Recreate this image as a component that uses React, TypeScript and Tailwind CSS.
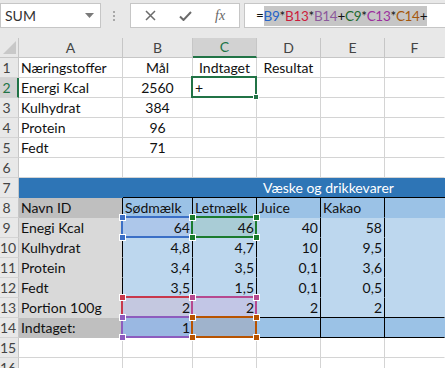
import React from "react";

type Cell = { t?: string; a?: "l" | "r" | "c"; s: string };

const W = ["w-[104px]", "w-[70px]", "w-[64px]", "w-[64px]", "w-[64px]", "w-[60px]"];

const P = "bg-white border-r-[#d4d4d4] border-b-[#d4d4d4]";
const PF = "bg-white border-r-white border-b-[#d4d4d4]";
const HA = "bg-[#bfbfbf] border-r-black border-b-[#bfbfbf]";
const H = "bg-[#9bc2e6] border-r-black border-b-[#9bc2e6]";
const HF = "bg-[#9bc2e6] border-r-[#9bc2e6] border-b-[#9bc2e6]";
const DA = "bg-[#d9d9d9] border-r-black border-b-[#d9d9d9]";
const D = "bg-[#bdd7ee] border-r-black border-b-[#bdd7ee]";
const DF = "bg-[#bdd7ee] border-r-[#bdd7ee] border-b-[#bdd7ee]";
const D13 = "bg-[#bdd7ee] border-r-black border-b-black";
const DF13 = "bg-[#bdd7ee] border-r-[#bdd7ee] border-b-black";
const T = "bg-[#9bc2e6] border-r-black border-b-black";
const TF = "bg-[#9bc2e6] border-r-[#9bc2e6] border-b-black";

const plain = (cells: Cell[]): Cell[] => {
  const out = [...cells];
  while (out.length < 5) out.push({ s: P });
  out.push({ s: PF });
  return out;
};

const rows: { n: number; cells: Cell[] }[] = [
  {
    n: 1,
    cells: plain([
      { t: "Næringstoffer", s: P },
      { t: "Mål", a: "c", s: P },
      { t: "Indtaget", a: "c", s: P },
      { t: "Resultat", a: "c", s: P },
    ]),
  },
  {
    n: 2,
    cells: plain([
      { t: "Energi Kcal", s: P },
      { t: "2560", a: "c", s: P },
      { t: "+", s: P },
    ]),
  },
  { n: 3, cells: plain([{ t: "Kulhydrat", s: P }, { t: "384", a: "c", s: P }]) },
  { n: 4, cells: plain([{ t: "Protein", s: P }, { t: "96", a: "c", s: P }]) },
  { n: 5, cells: plain([{ t: "Fedt", s: P }, { t: "71", a: "c", s: P }]) },
  { n: 6, cells: plain([]) },
];

const rowsB: { n: number; cells: Cell[] }[] = [
  {
    n: 8,
    cells: [
      { t: "Navn ID", s: HA },
      { t: "Sødmælk", s: H },
      { t: "Letmælk", s: H },
      { t: "Juice", s: H },
      { t: "Kakao", s: H },
      { s: HF },
    ],
  },
  {
    n: 9,
    cells: [
      { t: "Enegi Kcal", s: DA },
      { t: "64", a: "r", s: "bg-[#adc7ea] border-r-black border-b-[#adc7ea]" },
      { t: "46", a: "r", s: "bg-[#a9ccd6] border-r-black border-b-[#a9ccd6]" },
      { t: "40", a: "r", s: D },
      { t: "58", a: "r", s: D },
      { s: DF },
    ],
  },
  {
    n: 10,
    cells: [
      { t: "Kulhydrat", s: DA },
      { t: "4,8", a: "r", s: D },
      { t: "4,7", a: "r", s: D },
      { t: "10", a: "r", s: D },
      { t: "9,5", a: "r", s: D },
      { s: DF },
    ],
  },
  {
    n: 11,
    cells: [
      { t: "Protein", s: DA },
      { t: "3,4", a: "r", s: D },
      { t: "3,5", a: "r", s: D },
      { t: "0,1", a: "r", s: D },
      { t: "3,6", a: "r", s: D },
      { s: DF },
    ],
  },
  {
    n: 12,
    cells: [
      { t: "Fedt", s: DA },
      { t: "3,5", a: "r", s: D },
      { t: "1,5", a: "r", s: D },
      { t: "0,1", a: "r", s: D },
      { t: "0,5", a: "r", s: D },
      { s: DF },
    ],
  },
  {
    n: 13,
    cells: [
      { t: "Portion 100g", s: DA },
      { t: "2", a: "r", s: "bg-[#c4c8e0] border-r-black border-b-black" },
      { t: "2", a: "r", s: "bg-[#c2c6e6] border-r-black border-b-black" },
      { t: "2", a: "r", s: D13 },
      { t: "2", a: "r", s: D13 },
      { s: DF13 },
    ],
  },
  {
    n: 14,
    cells: [
      { t: "Indtaget:", s: HA },
      { t: "1", a: "r", s: "bg-[#9ab8e2] border-r-black border-b-black" },
      { s: "bg-[#9fb3cc] border-r-black border-b-black" },
      { s: T },
      { s: T },
      { s: TF },
    ],
  },
  { n: 15, cells: plain([]) },
  { n: 16, cells: plain([]) },
];

const refs = [
  { x0: 122, x1: 192, y0: 217, y1: 237, c: "#3b6fc6" },
  { x0: 122, x1: 192, y0: 297, y1: 317, c: "#c8384c" },
  { x0: 122, x1: 192, y0: 317, y1: 337, c: "#8d5cbe" },
  { x0: 192, x1: 256, y0: 217, y1: 237, c: "#1b7b2e" },
  { x0: 192, x1: 256, y0: 297, y1: 317, c: "#b6498f" },
  { x0: 192, x1: 256, y0: 317, y1: 337, c: "#b85300" },
];

function RowHead({ n, active }: { n: number; active?: boolean }) {
  return (
    <div
      className={`w-[19px] h-full shrink-0 border-b border-b-[#d4d4d4] leading-[19px] ${
        active
          ? "bg-[#d2d2d2] border-r-2 border-r-[#217346] text-[#217346]"
          : "bg-[#e8e8e8] border-r border-r-[#c6c6c6] text-[#444]"
      }`}
    >
      <span className="block w-[13px] text-center">{n}</span>
    </div>
  );
}

function Row({ n, cells }: { n: number; cells: Cell[] }) {
  return (
    <div className="flex h-[20px]">
      <RowHead n={n} active={n === 2} />
      {cells.map((c, i) => (
        <div
          key={i}
          className={`${W[i]} h-full shrink-0 border-r border-b px-[2px] leading-[19px] whitespace-nowrap ${c.s} ${
            c.a === "r" ? "text-right" : c.a === "c" ? "text-center" : "text-left"
          }`}
        >
          {c.t}
        </div>
      ))}
    </div>
  );
}

function FormulaBar() {
  return (
    <div className="flex h-[38px] items-start bg-[#e8e8e8] pt-[3px]">
      <div className="flex h-[25px] w-[101px] items-center justify-between border border-[#c6c6c6] bg-white pl-[4px] pr-[6px] text-[14px] text-[#333]">
        <span>SUM</span>
        <svg width="9" height="5" viewBox="0 0 9 5">
          <path d="M0 0h9L4.5 5z" fill="#7a7a7a" />
        </svg>
      </div>
      <div className="flex h-[25px] w-[29px] flex-col items-center justify-center gap-[2px] pr-[3px]">
        <span className="h-[2px] w-[2px] bg-[#a8a8a8]" />
        <span className="h-[2px] w-[2px] bg-[#a8a8a8]" />
        <span className="h-[2px] w-[2px] bg-[#a8a8a8]" />
      </div>
      <div className="flex h-[25px] w-[110px] items-center gap-[23px] border border-[#c6c6c6] bg-white pl-[14px]">
        <svg width="11" height="11" viewBox="0 0 11 11">
          <path d="M1 1l9 9M10 1l-9 9" stroke="#6b6b6b" strokeWidth="1.5" />
        </svg>
        <svg width="13" height="10" viewBox="0 0 13 10">
          <path d="M1 5.5l3.5 3.5L12 1" stroke="#6b6b6b" strokeWidth="2" fill="none" />
        </svg>
        <span className="font-['Liberation_Serif',serif] text-[14px] italic text-[#666]">fx</span>
      </div>
      <div className="ml-[4px] flex h-[25px] flex-1 items-center border border-r-0 border-[#c6c6c6] bg-white pl-[11px] text-[13.5px] tracking-[-0.3px]">
        <span className="text-[#111]">=</span>
        <span className="bg-[#c6c6c6] leading-[20px]">
          <span className="text-[#2463c8]">B9</span>
          <span className="text-[#111]">*</span>
          <span className="text-[#cc1c3c]">B13</span>
          <span className="text-[#111]">*</span>
          <span className="text-[#8c5a9c]">B14</span>
          <span className="text-[#111]">+</span>
          <span className="text-[#1d6b30]">C9</span>
          <span className="text-[#111]">*</span>
          <span className="text-[#9c2f9e]">C13</span>
          <span className="text-[#111]">*</span>
          <span className="text-[#a5570c]">C14</span>
          <span className="text-[#111]">+</span>
        </span>
      </div>
    </div>
  );
}

function ColumnHeader() {
  const letters = ["A", "B", "C", "D", "E", "F"];
  return (
    <div className="flex h-[20px] bg-[#e8e8e8] text-[#444]">
      <div className="flex h-full w-[19px] shrink-0 items-end justify-center border-r border-b border-[#c6c6c6] pb-[3px]">
        <svg width="13" height="13" viewBox="0 0 13 13">
          <path d="M13 0v13H0z" fill="#c8c8c8" />
        </svg>
      </div>
      {letters.map((l, i) =>
        l === "C" ? (
          <div
            key={l}
            className={`${W[i]} h-full shrink-0 border-r border-r-[#c6c6c6] border-b-2 border-b-[#217346] bg-[#d2d2d2] text-center leading-[18px] text-[#217346]`}
          >
            {l}
          </div>
        ) : (
          <div
            key={l}
            className={`${W[i]} h-full shrink-0 border-r border-b border-[#c6c6c6] text-center leading-[19px] ${
              i === 5 ? "border-r-[#e8e8e8]" : ""
            }`}
          >
            {l}
          </div>
        )
      )}
    </div>
  );
}

function Row7() {
  return (
    <div className="flex h-[20px]">
      <RowHead n={7} />
      <div className="h-full w-[104px] shrink-0 border-b border-[#2e75b6] bg-[#2e75b6]" />
      <div className="h-full w-[322px] shrink-0 border-b border-black bg-[#2e75b6] pl-[140px] leading-[19px] whitespace-nowrap text-white">
        Væske og drikkevarer
      </div>
    </div>
  );
}

function Overlays() {
  return (
    <>
      <div
        className="absolute border-2 border-[#217346]"
        style={{ left: 191, top: 76, width: 66, height: 22 }}
      />
      <div
        className="absolute h-[6px] w-[6px] border border-white bg-[#217346]"
        style={{ left: 253, top: 94 }}
      />
      {refs.map((r, i) => (
        <div
          key={i}
          className="absolute border-2"
          style={{
            left: r.x0 - 1,
            top: r.y0 - 1,
            width: r.x1 - r.x0 + 2,
            height: r.y1 - r.y0 + 2,
            borderColor: r.c,
          }}
        />
      ))}
      {refs.map((r, i) =>
        [
          [r.x0, r.y0],
          [r.x1, r.y0],
          [r.x0, r.y1],
          [r.x1, r.y1],
        ].map(([x, y], j) => (
          <div
            key={`${i}-${j}`}
            className="absolute h-[7px] w-[7px] border border-white"
            style={{ left: x - 3, top: y - 3, backgroundColor: r.c }}
          />
        ))
      )}
    </>
  );
}

export default function App() {
  return (
    <div className="relative h-[368px] w-[445px] overflow-hidden bg-white font-['Lato','Liberation_Sans',sans-serif] text-[14px] text-[#111]">
      <FormulaBar />
      <ColumnHeader />
      {rows.map((r) => (
        <Row key={r.n} n={r.n} cells={r.cells} />
      ))}
      <Row7 />
      {rowsB.map((r) => (
        <Row key={r.n} n={r.n} cells={r.cells} />
      ))}
      <Overlays />
    </div>
  );
}
